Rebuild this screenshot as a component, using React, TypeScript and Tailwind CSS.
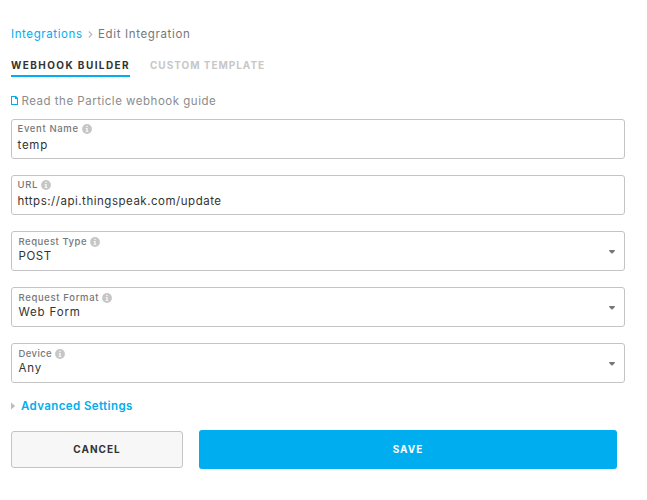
import React from "react";

function InfoIcon() {
  return (
    <svg width="10" height="10" viewBox="0 0 10 10" className="block shrink-0">
      <circle cx="5" cy="5" r="4.9" fill="#c6c6c6" />
      <path d="M4.3 1.7h1.4v1.3H4.3zM3.7 4h2v3.2h.7v.9H3.6v-.9h.7V4.9h-.6z" fill="#fff" fillOpacity=".85" />
    </svg>
  );
}

type FieldProps = {
  label: string;
  value: string;
  labelTracking: string;
  valueTracking: string;
  select?: boolean;
};

function Field({ label, value, labelTracking, valueTracking, select }: FieldProps) {
  return (
    <div
      className={`flex h-10 w-[614px] items-center justify-between rounded-[3px] border border-[#c4c4c4] bg-white pr-[9px] ${
        select ? "pl-[6.5px]" : "pl-[5.5px]"
      }`}
    >
      <div className={`flex h-full flex-col ${select ? "pt-[4px]" : "pt-[3px]"}`}>
        <div className="flex h-3 items-center gap-[3px]">
          <span className={`text-[9.5px] leading-3 font-medium whitespace-nowrap text-[#777] ${labelTracking}`}>{label}</span>
          <InfoIcon />
        </div>
        <span
          className={`text-[11.5px] leading-4 whitespace-nowrap text-[#333] ${valueTracking} ${select ? "" : "mt-[2px]"}`}
        >
          {value}
        </span>
      </div>
      {select && (
        <svg width="6" height="4" viewBox="0 0 6 4" className="mt-[2px] block">
          <path d="M.2 0h5.6v1L3.5 3.4h-1L.2 1z" fill="#777" />
        </svg>
      )}
    </div>
  );
}

export default function App() {
  return (
    <main className="h-[500px] w-[647px] overflow-hidden bg-white pt-[26px] pl-[11px] font-['Inter','Liberation_Sans',sans-serif]">
      <nav className="flex h-4 items-center text-[11.5px] leading-4 whitespace-nowrap">
        <a className="w-[77px] tracking-[0.6px] text-[#00aeef]">Integrations</a>
        <svg width="5" height="7" viewBox="0 0 5 7" className="mr-[5px] block" fill="none" stroke="#bbb" strokeWidth="1.2">
          <path d="M.8.5l3 3-3 3" />
        </svg>
        <span className="tracking-[0.65px] text-[#777]">Edit Integration</span>
      </nav>
      <div className="mt-[13px] flex h-[22px] gap-5 text-[10px] leading-5 font-bold whitespace-nowrap">
        <div className="w-[119px] border-b-2 border-[#00aeef] tracking-[1.42px] text-[#333]">WEBHOOK BUILDER</div>
        <div className="tracking-[0.97px] text-[#c7c7c7]">CUSTOM TEMPLATE</div>
      </div>
      <div className="mt-4 flex h-4 items-center gap-[2.5px]">
        <svg width="8" height="9" viewBox="0 0 8 9" className="mb-px block" fill="#00aeef">
          <path fillRule="evenodd" d="M0 0h5l2 2v7H0zM1 1v7h5V3H4V1z" />
        </svg>
        <span className="text-[11.5px] leading-4 tracking-[0.51px] whitespace-nowrap text-[#8c8c8c]">
          Read the Particle webhook guide
        </span>
      </div>
      <form className="mt-[10px] flex flex-col gap-4">
        <Field label="Event Name" value="temp" labelTracking="tracking-[0.65px]" valueTracking="tracking-[0.75px]" />
        <Field label="URL" value="https://api.thingspeak.com/update" labelTracking="tracking-[0.7px]" valueTracking="tracking-[0.52px]" />
        <Field label="Request Type" value="POST" labelTracking="tracking-[0.53px]" valueTracking="tracking-[0.6px]" select />
        <Field label="Request Format" value="Web Form" labelTracking="tracking-[0.65px]" valueTracking="tracking-[0.83px]" select />
        <Field label="Device" value="Any" labelTracking="tracking-[0.4px]" valueTracking="tracking-[0.85px]" select />
      </form>
      <div className="mt-[15px] flex h-4 items-center gap-[5px]">
        <svg width="5" height="8" viewBox="0 0 5 8" className="block">
          <path d="M0 .5L4.2 4 0 7.5z" fill="#bdbdbd" />
        </svg>
        <span className="text-[11.5px] leading-4 font-semibold tracking-[0.4px] whitespace-nowrap text-[#00aeef]">
          Advanced Settings
        </span>
      </div>
      <div className="mt-4 flex items-center gap-4 text-[10px] font-bold">
        <button className="h-[37px] w-[172px] rounded-[3px] border border-[#c4c4c4] bg-[#f7f7f7] tracking-[1px] text-[#333]">CANCEL</button>
        <button className="h-[39px] w-[418px] rounded-[3px] bg-[#00aeef] tracking-[1px] text-white">SAVE</button>
      </div>
    </main>
  );
}
